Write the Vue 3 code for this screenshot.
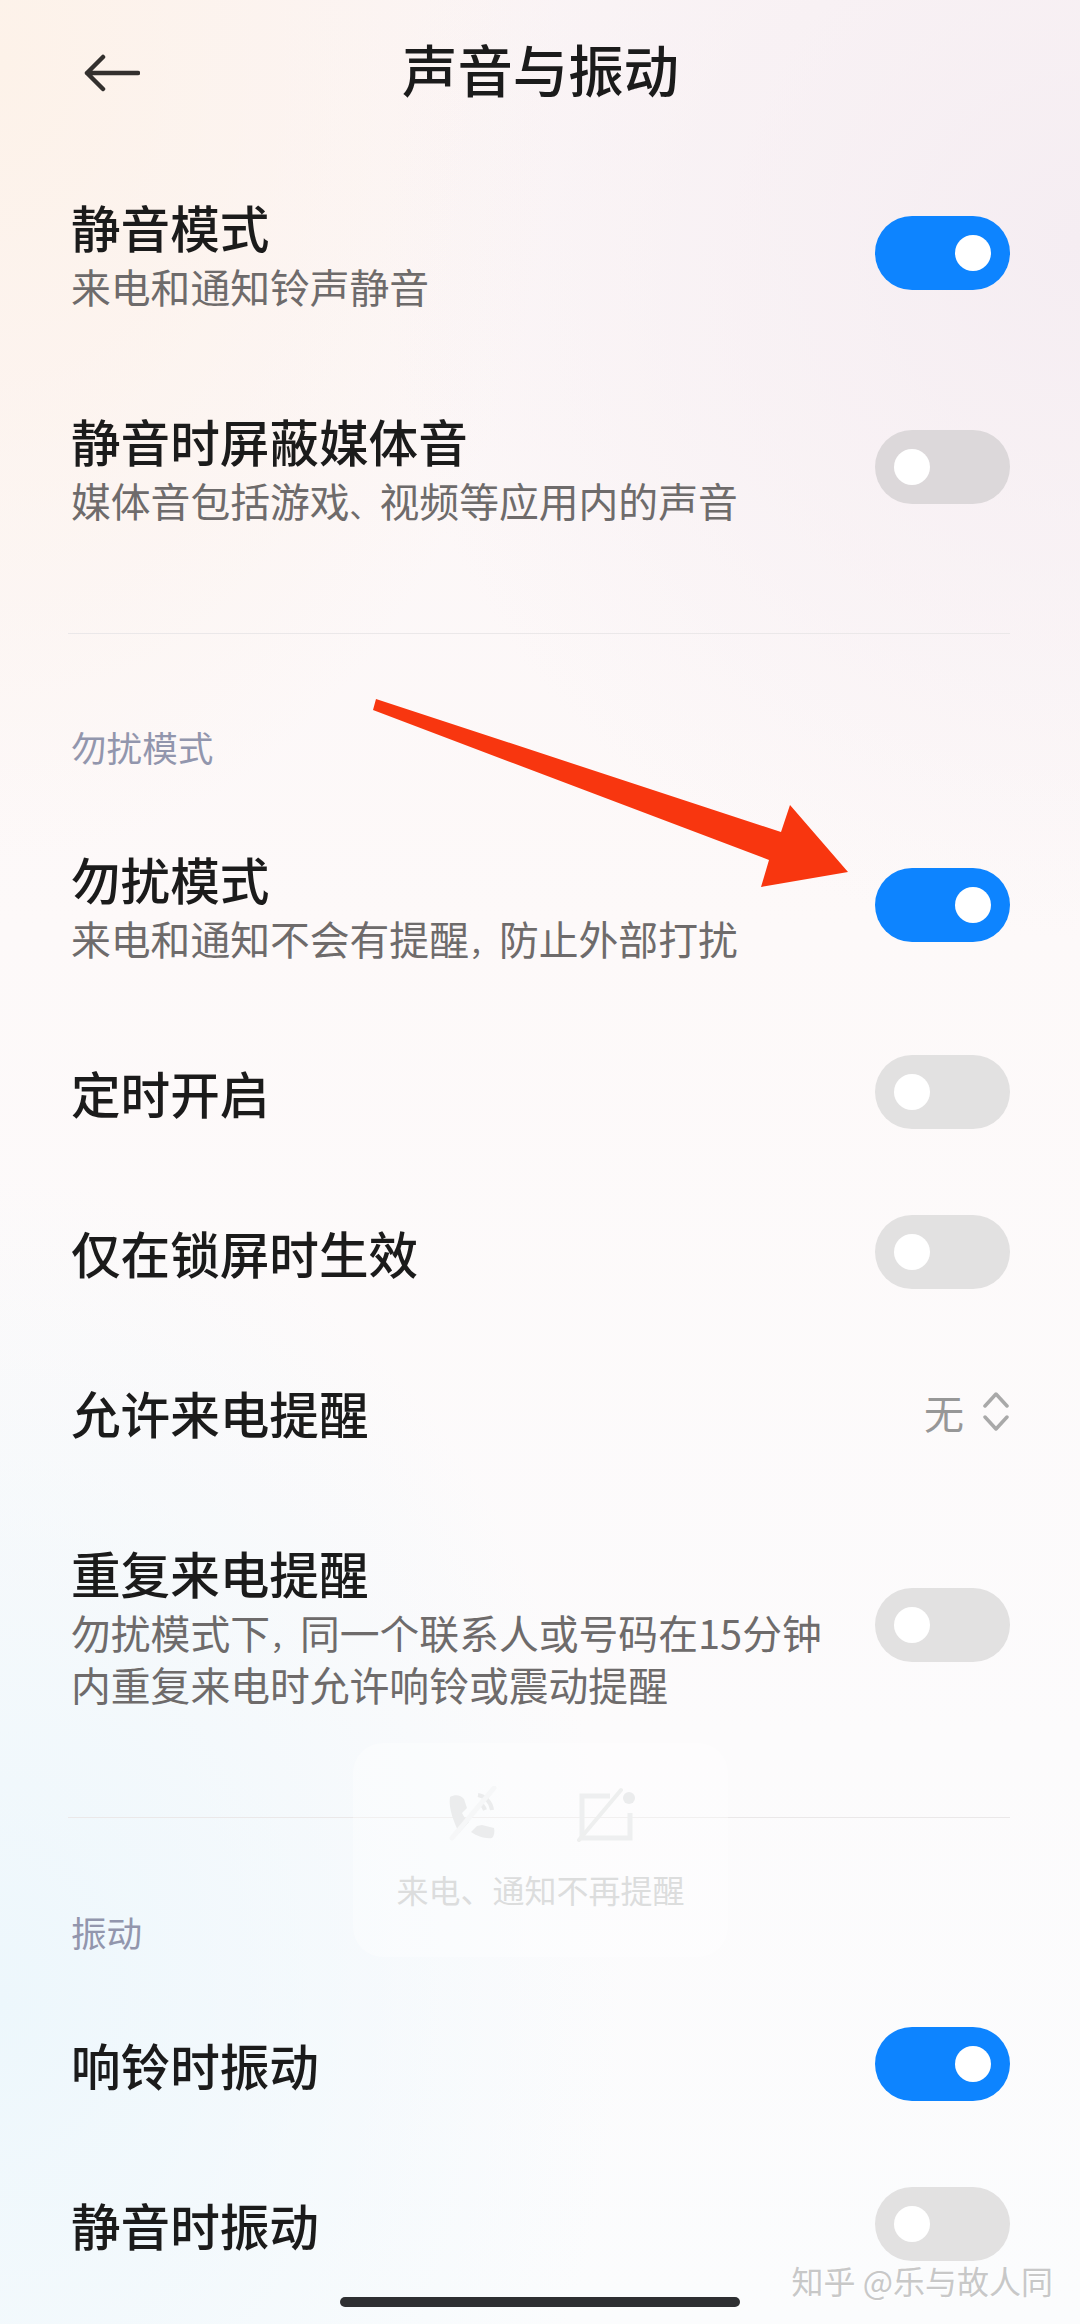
<template>
  <div class="page">
    <header class="topbar">
      <svg class="back" width="56" height="40" viewBox="0 0 56 40">
        <path d="M3 20H54M19 4L3 20L19 36" fill="none" stroke="#33302e" stroke-width="4.5" stroke-linecap="round" stroke-linejoin="round" />
      </svg>
      <h1>声音与振动</h1>
    </header>

    <section v-for="group in groups" :key="group.id" :class="['group', group.id]">
      <template v-if="group.label">
        <div class="rule"></div>
        <div class="label">{{ group.label }}</div>
      </template>

      <div v-for="row in group.rows" :key="row.title" :class="['row', row.size]">
        <div class="row-text">
          <div class="row-title">{{ row.title }}</div>
          <div v-if="row.sub" class="row-sub">
            <span v-for="(part, i) in splitPunct(row.sub)" :key="i" :class="{ punct: part.punct }">{{ part.text }}</span>
          </div>
        </div>

        <div v-if="row.value" class="picker">
          <span>{{ row.value }}</span>
          <svg width="28" height="40" viewBox="0 0 28 40">
            <path d="M3 14L14 2L25 14M3 25L14 37L25 25" fill="none" stroke="#a9a9a9" stroke-width="3.5" stroke-linecap="round" stroke-linejoin="round" />
          </svg>
        </div>
        <div v-else :class="['switch', { on: row.on, tint: row.tint }]"><i></i></div>
      </div>
    </section>

    <svg class="arrow" width="1080" height="900" viewBox="0 0 1080 900">
      <polygon points="376,699 373,710 769,860 761,887 848,872 790,805 781,832" fill="#f8360f" />
    </svg>

    <div class="toast">
      <div class="toast-icons">
        <svg width="56" height="56" viewBox="0 0 56 56">
          <path d="M3 11c5-3 11-2 14 2l3 9-5 5c2 4 4 7 7 9l-10 11C8 38 1 23 3 11z" fill="#ebeced" />
          <path d="M31 9c7 1 13 7 14 15M33 18c3 1 4 3 5 6" fill="none" stroke="#ebeced" stroke-width="4" />
          <path d="M24 46l6-6 5-1 12 3c1 4 0 8-2 10-7 1-15-2-21-6z" fill="#ebeced" />
          <path d="M5 52L47 2" stroke="#f6f7f8" stroke-width="5" stroke-linecap="round" />
        </svg>
        <svg width="60" height="56" viewBox="0 0 60 56">
          <path d="M33 10H5V52H53V27" fill="none" stroke="#eeeff0" stroke-width="5" />
          <path d="M2 54L44 4" stroke="#eeefef" stroke-width="4" stroke-linecap="round" />
          <circle cx="52" cy="12" r="6" fill="#ebeced" />
        </svg>
      </div>
      <div class="toast-text">来电、通知不再提醒</div>
    </div>

    <div class="watermark">知乎 @乐与故人同</div>
    <div class="home-bar"></div>
  </div>
</template>

<script setup>
const groups = [
  {
    id: 'sound',
    rows: [
      { title: '静音模式', sub: '来电和通知铃声静音', on: true, size: 'two' },
      { title: '静音时屏蔽媒体音', sub: '媒体音包括游戏、视频等应用内的声音', on: false, tint: true, size: 'two' }
    ]
  },
  {
    id: 'dnd',
    label: '勿扰模式',
    rows: [
      { title: '勿扰模式', sub: '来电和通知不会有提醒，防止外部打扰', on: true, size: 'two' },
      { title: '定时开启', on: false },
      { title: '仅在锁屏时生效', on: false },
      { title: '允许来电提醒', value: '无' },
      {
        title: '重复来电提醒',
        sub: '勿扰模式下，同一个联系人或号码在15分钟\n内重复来电时允许响铃或震动提醒',
        on: false,
        size: 'three'
      }
    ]
  },
  {
    id: 'vibrate',
    label: '振动',
    rows: [
      { title: '响铃时振动', on: true },
      { title: '静音时振动', on: false }
    ]
  }
];

// the phone's font sets punctuation narrower than a full em
const splitPunct = (text) =>
  text
    .split(/([，、])/)
    .filter(Boolean)
    .map((part) => ({ text: part, punct: part === '，' || part === '、' }));
</script>

<style>
html,
body {
  margin: 0;
  background: #fdf9f9;
}
</style>

<style scoped>
.page {
  position: relative;
  width: 1080px;
  height: 2324px;
  overflow: hidden;
  box-sizing: border-box;
  padding: 0 70px 0 71px;
  color: #1b1b1b;
  font-family: "Noto Sans CJK SC", "Noto Sans", sans-serif;
  background:
    radial-gradient(620px 820px at 0 2000px, #edf7fc 0, rgba(237, 247, 252, 0) 100%),
    radial-gradient(700px 700px at 1080px 240px, #f5edf2 0, rgba(245, 237, 242, 0) 100%),
    radial-gradient(560px 800px at 0 60px, #fdf2e9 0, rgba(253, 242, 233, 0) 100%),
    linear-gradient(180deg, #fbf5f6 0, #fdf9f9 40%, #fcfbfc 75%, #fbfcfd 100%);
}

.topbar {
  position: relative;
  height: 146px;
  display: flex;
  align-items: flex-start;
  justify-content: center;
}

.topbar h1 {
  margin: 32px 0 0;
  font-size: 55.4px;
  line-height: 72px;
  font-weight: 500;
}

.back {
  position: absolute;
  left: 13px;
  top: 53px;
}

.row {
  display: flex;
  align-items: center;
  justify-content: space-between;
  height: 160px;
}

.row.two {
  height: 214px;
}

.row.three {
  height: 266px;
}

.row-title {
  font-size: 49.6px;
  line-height: 64px;
  font-weight: 500;
}

.row-sub {
  margin-top: 2px;
  font-size: 39.8px;
  line-height: 52px;
  color: #6e6b6b;
  white-space: pre-line;
}

.punct {
  font-size: 30px;
  line-height: 1;
}

.switch {
  flex: none;
  width: 135px;
  height: 74px;
  border-radius: 37px;
  background: #e2e1e1;
  display: flex;
  align-items: center;
  padding: 0 19px;
  box-sizing: border-box;
}

.switch i {
  width: 36px;
  height: 36px;
  border-radius: 50%;
  background: #fff;
}

.switch.on {
  background: #0d84ff;
  justify-content: flex-end;
}

.switch.tint {
  background: #dcd8da;
}

.picker {
  display: flex;
  align-items: center;
  gap: 18px;
  font-size: 40px;
  color: #979797;
}

.rule {
  height: 1px;
  background: #ebe8e9;
  margin: 59px 0 0 -3px;
}

.label {
  margin-top: 91px;
  height: 73px;
  font-size: 35.6px;
  line-height: 44px;
  color: #9296ad;
}

.vibrate .label {
  margin-top: 92px;
  height: 74px;
}

.arrow {
  position: absolute;
  left: 0;
  top: 0;
}

.toast {
  position: absolute;
  left: 353px;
  top: 1743px;
  width: 375px;
  height: 214px;
  box-sizing: border-box;
  padding-top: 43px;
  border-radius: 30px;
  background: rgba(255, 255, 255, 0.35);
  text-align: center;
}

.toast-icons {
  display: flex;
  justify-content: center;
  gap: 74px;
  height: 56px;
  padding-left: 3px;
}

.toast-text {
  margin-top: 25px;
  font-size: 32px;
  line-height: 44px;
  color: #dcdddd;
}

.watermark {
  position: absolute;
  right: 27px;
  top: 2260px;
  font-size: 32px;
  line-height: 40px;
  color: #c8c8c8;
  text-shadow: 1px 1px 0 #fff;
}

.home-bar {
  position: absolute;
  left: 340px;
  top: 2297px;
  width: 400px;
  height: 10px;
  border-radius: 5px;
  background: #2e2f32;
}
</style>
